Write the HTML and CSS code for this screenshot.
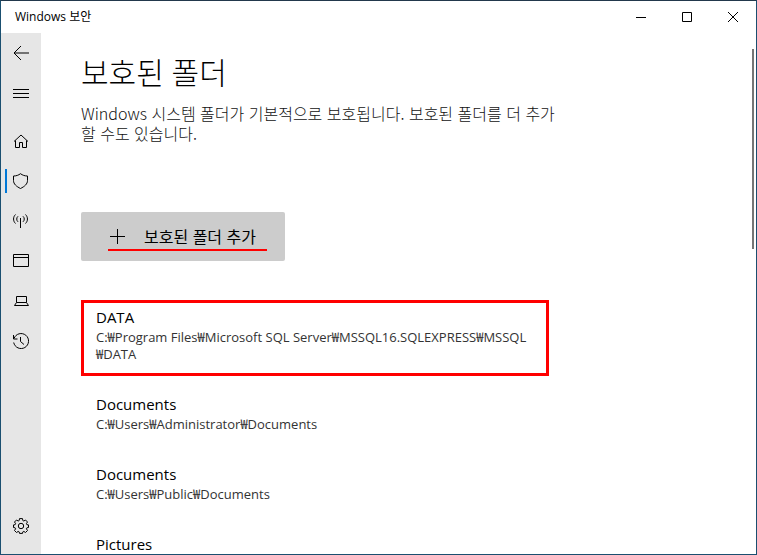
FILE: index.html
```html
<!DOCTYPE html>
<html lang="ko">
<head>
<meta charset="utf-8">
<meta name="viewport" content="width=device-width, initial-scale=1">
<title>Windows 보안</title>
<link rel="stylesheet" href="styles.css">
</head>
<body>
<div class="window">
  <header class="titlebar">
    <span class="titlebar-text">Windows 보안</span>
    <div class="captions">
      <button class="caption" type="button" aria-label="최소화"><svg width="10" height="10" viewBox="0 0 10 10"><path d="M0 5.5h10"/></svg></button>
      <button class="caption" type="button" aria-label="최대화"><svg width="10" height="10" viewBox="0 0 10 10"><path d="M.5.5h9v9h-9z"/></svg></button>
      <button class="caption" type="button" aria-label="닫기"><svg width="10" height="10" viewBox="0 0 10 10"><path d="M0 0l10 10M10 0L0 10"/></svg></button>
    </div>
  </header>
  <div class="body">
    <nav class="rail" aria-label="탐색">
      <button class="rail-item" type="button" aria-label="뒤로"><svg width="16" height="16" viewBox="0 0 16 16"><path d="M16 8H1M8 1L1 8l7 7"/></svg></button>
      <button class="rail-item" type="button" aria-label="메뉴"><svg width="16" height="16" viewBox="0 0 16 16"><path d="M0 4.500h16M0 8.500h16M0 12.500h16"/></svg></button>
      <div class="rail-group">
        <button class="rail-item" type="button" aria-label="홈"><svg width="16" height="16" viewBox="0 0 16 16"><path d="M1 8.500L8 2l7 6.500M2.500 7.500v7h4v-5h3v5h4v-7"/></svg></button>
        <button class="rail-item rail-item-current" type="button" aria-current="page" aria-label="바이러스 및 위협 방지"><svg width="16" height="16" viewBox="0 0 16 16"><path d="M7.500.7C5.500 2.200 3.200 3 .5 3v4.500c0 3.600 3 6 7 8 4-2 7-4.400 7-8V3c-2.700 0-5-.8-7-2.300z"/></svg></button>
        <button class="rail-item" type="button" aria-label="방화벽 및 네트워크 보호"><svg width="16" height="16" viewBox="0 0 16 16"><path d="M7.500 5v10M2.500 1.500C-.1 4-.1 8 2.500 10.500M12.500 1.500c2.600 2.500 2.600 6.500 0 9M5 3.300c-1.700 1.500-1.700 4 0 5.500M10 3.300c1.700 1.500 1.700 4 0 5.500"/></svg></button>
        <button class="rail-item" type="button" aria-label="앱 및 브라우저 컨트롤"><svg width="16" height="16" viewBox="0 0 16 16"><path d="M.5 1.500h15v12H.5zM.5 4.500h15"/></svg></button>
        <button class="rail-item" type="button" aria-label="장치 보안"><svg width="16" height="16" viewBox="0 0 16 16"><path d="M3.500 9.500v-6h10v6zM3.500 9.500l-2 3h14l-2-3"/></svg></button>
        <button class="rail-item" type="button" aria-label="보호 기록"><svg width="16" height="16" viewBox="0 0 16 16"><path d="M.5 2v4h4M1 5.500a7.500 7.500 0 1 1-.3 4M7.500 4v4.500l3.500 3"/></svg></button>
      </div>
      <button class="rail-item rail-settings" type="button" aria-label="설정"><svg width="16" height="16" viewBox="0 0 16 16"><path d="M6.500.6h3l.3 1.900 1 .5 1.700-1 2 2-1.100 1.700.5 1 1.600.2v2.600l-1.600.3-.5 1 1.100 1.700-2 2-1.700-1.100-1 .5-.3 1.500h-3l-.3-1.500-1-.5-1.700 1.100-2-2 1.100-1.700-.5-1-1.600-.3V6.900l1.600-.2.500-1L1.500 4l2-2 1.700 1 1-.5z"/><circle cx="8" cy="8" r="2.700"/></svg></button>
    </nav>
    <main class="content">
      <h1>보호된 폴더</h1>
      <p class="intro">Windows 시스템 폴더가 기본적으로 보호됩니다. 보호된 폴더를 더 추가할 수도 있습니다.</p>
      <button class="add" type="button">
        <span class="add-mark"><svg width="15" height="15" viewBox="0 0 15 15"><path d="M7.500 0v15M0 7.500h15"/></svg><span>보호된 폴더 추가</span></span>
      </button>
      <ul class="folders">
        <li class="folder folder-marked"><h2>DATA</h2><p>C:₩Program Files₩Microsoft SQL Server₩MSSQL16.SQLEXPRESS₩MSSQL<wbr>₩DATA</p></li>
        <li class="folder"><h2>Documents</h2><p>C:₩Users₩Administrator₩Documents</p></li>
        <li class="folder"><h2>Documents</h2><p>C:₩Users₩Public₩Documents</p></li>
        <li class="folder"><h2>Pictures</h2></li>
      </ul>
      <div class="scroll-thumb"></div>
    </main>
  </div>
</div>
</body>
</html>
```
FILE: styles.css
```css
* { box-sizing: border-box; }

body {
  margin: 0;
  color: #000;
  background: #fff;
  font-family: "Open Sans", "Noto Sans CJK KR", sans-serif;
}

h1, h2, p, ul { margin: 0; padding: 0; font-weight: 400; }

button {
  margin: 0;
  padding: 0;
  border: 0;
  background: none;
  color: inherit;
  font: inherit;
}

svg { display: block; fill: none; stroke: #000; stroke-width: 1; }

.window {
  display: flex;
  flex-direction: column;
  height: 100vh;
  border: 1px solid #1a4f70;
  border-top-color: #22384c;
}

.titlebar {
  display: flex;
  flex: none;
  justify-content: space-between;
  height: 32px;
  padding-left: 14px;
  font-size: 12px;
  line-height: 32px;
}

.captions { display: flex; }

.caption {
  display: grid;
  place-items: center;
  width: 46px;
}

.body { display: flex; flex: 1; min-height: 0; }

.rail {
  display: flex;
  flex: none;
  flex-direction: column;
  width: 40px;
  padding-bottom: 8px;
  background: #e6e6e6;
}

.rail-group { margin-top: 8px; }

.rail-item {
  display: grid;
  place-items: center;
  width: 40px;
  height: 40px;
}

.rail-item-current { position: relative; }

.rail-item-current::before {
  content: "";
  position: absolute;
  top: 8px;
  left: 4px;
  width: 2px;
  height: 24px;
  background: #0078d7;
}

.rail-settings { margin-top: auto; }

.content {
  position: relative;
  flex: 1;
  min-width: 0;
  padding: 20px 40px 0;
  overflow: hidden;
}

h1 {
  font-size: 30px;
  font-weight: 300;
  line-height: 40px;
}

.intro {
  max-width: 484px;
  margin-top: 10px;
  color: #111;
  font-family: "Noto Sans CJK KR", sans-serif;
  font-size: 16px;
  font-weight: 300;
  line-height: 20px;
  word-break: break-all;
}

.add {
  display: block;
  margin-top: 69px;
  padding: 12px 18px 10px 27px;
  border-radius: 2px;
  background: #ccc;
  font-family: "Noto Sans CJK KR", sans-serif;
  font-size: 16px;
}

.add-mark {
  display: flex;
  align-items: center;
  gap: 19px;
  padding: 0 11px 0 2px;
  border-bottom: 2px solid #f00;
  line-height: 25px;
}

.folders { margin-top: 39px; list-style: none; }

.folder {
  max-width: 468px;
  margin-bottom: 11px;
  padding: 4px 12px 10px;
  border: 3px solid transparent;
}

.folder-marked { border-color: #f00; }

.folder h2 { font-size: 15px; line-height: 20px; }

.folder p { margin-top: 2px; color: #333; font-size: 13px; line-height: 17px; }

.scroll-thumb {
  position: absolute;
  top: 16px;
  right: 2px;
  width: 2px;
  height: 200px;
  background: #767676;
}
```
